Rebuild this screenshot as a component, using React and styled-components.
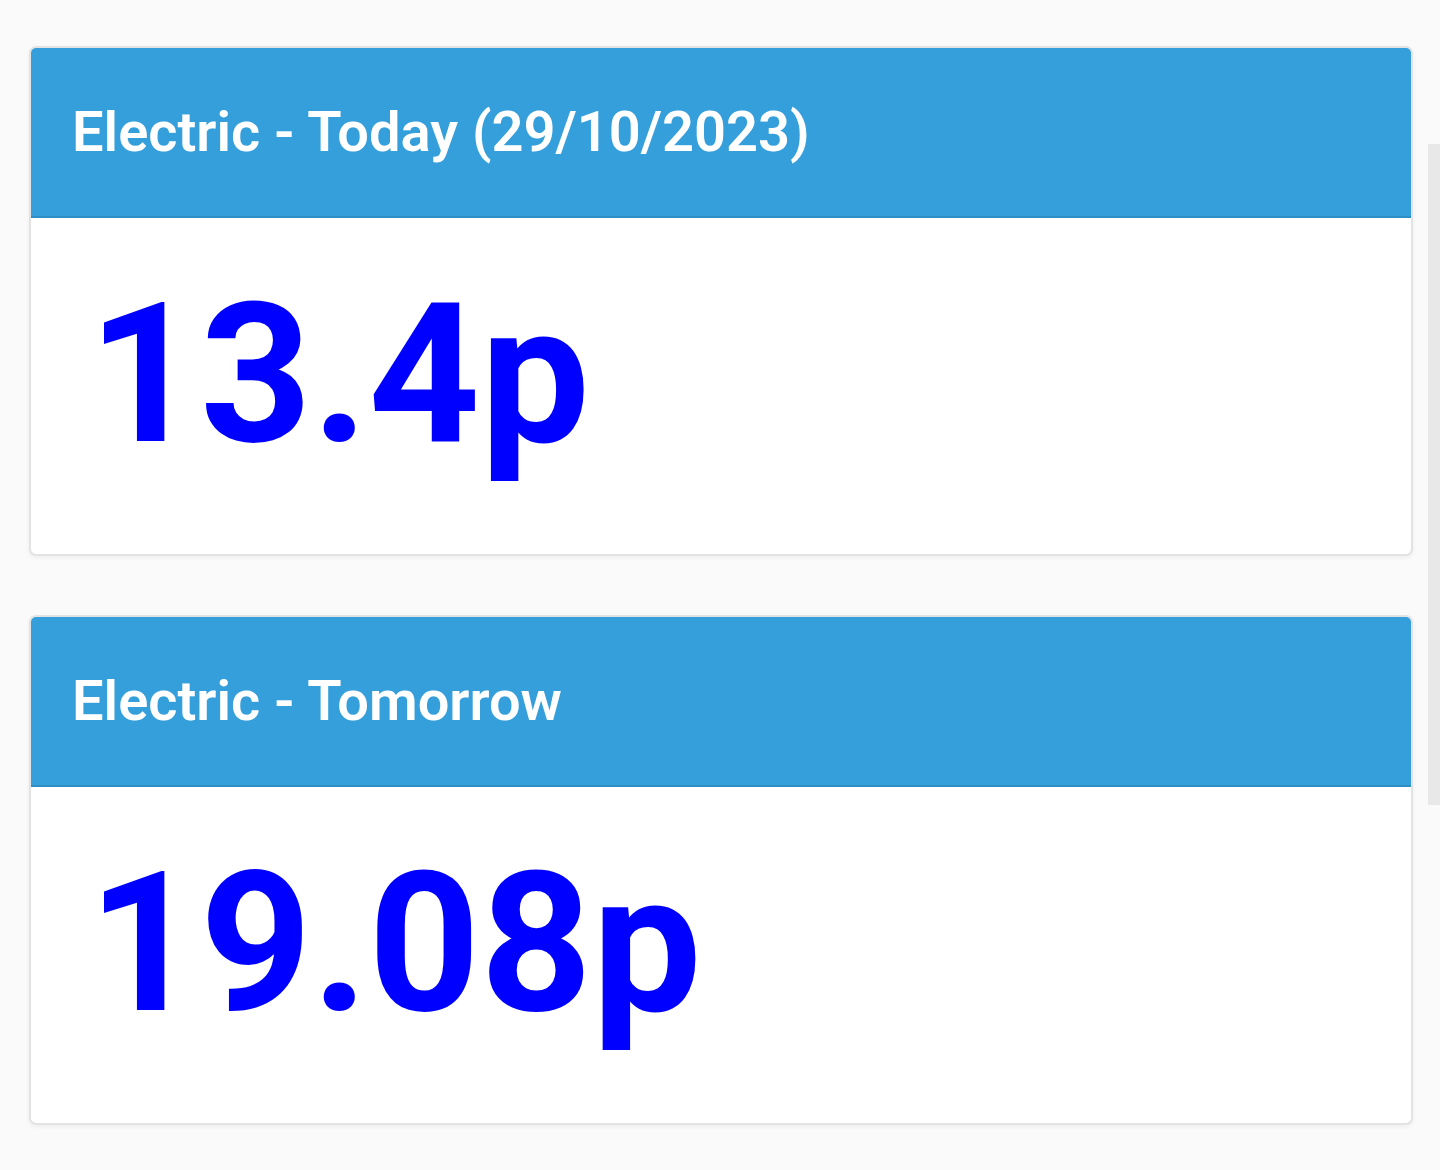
import React from 'react';
import styled, { createGlobalStyle } from 'styled-components';

const GlobalStyle = createGlobalStyle`
    html, body {
        margin: 0;
        padding: 0;
        background-color: #fafafa;
        font-family: Roboto, "Liberation Sans", sans-serif;
    }
`

const Page = styled.div`
    position: relative;
    min-height: 1170px;
    padding: 46px 27px 0 29px;
    box-sizing: border-box;
    display: flex;
    flex-direction: column;
    gap: 59px;
`

const Card = styled.div`
    width: 1384px;
    box-sizing: border-box;
    background-color: #ffffff;
    border: 2px solid #e3e3e3;
    border-radius: 7px;
    box-shadow: 0 2px 4px rgba(0, 0, 0, 0.05);
    overflow: hidden;
`

const CardHeader = styled.div`
    height: 170px;
    box-sizing: border-box;
    background-color: #349fdb;
    border-bottom: 2px solid #2e8fc6;
    display: flex;
    align-items: center;
    padding: 0 0 0 41px;
`

const CardTitle = styled.span`
    color: #ffffff;
    font-size: 56px;
    font-weight: 600;
`

const CardBody = styled.div`
    height: 336px;
    box-sizing: border-box;
    padding: 59px 0 0 57px;
`

const Price = styled.div`
    color: #0000ff;
    font-size: 195px;
    font-weight: 700;
    line-height: 1;
`

const ScrollTrack = styled.div`
    position: absolute;
    right: 0;
    top: 144px;
    width: 12px;
    height: 661px;
    background-color: #e8e8e8;
`

const prices = [
    { title: 'Electric - Today (29/10/2023)', value: '13.4p' },
    { title: 'Electric - Tomorrow', value: '19.08p' },
];

export default function App() {
    return (
        <>
            <GlobalStyle />
            <Page>
                {
                    prices.map(price => (
                        <Card key={price.title}>
                            <CardHeader>
                                <CardTitle>{price.title}</CardTitle>
                            </CardHeader>
                            <CardBody>
                                <Price>{price.value}</Price>
                            </CardBody>
                        </Card>
                    ))
                }
                <ScrollTrack />
            </Page>
        </>
    )
}
